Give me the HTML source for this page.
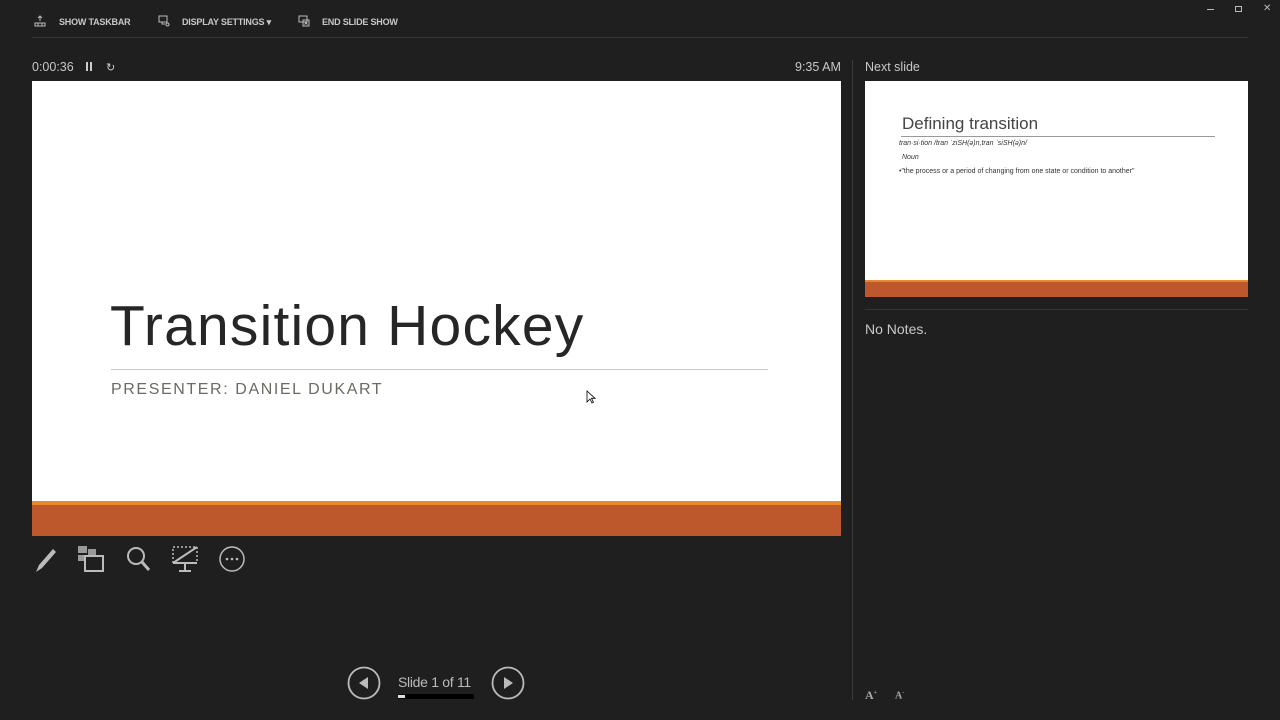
<!DOCTYPE html>
<html><head><style>
*{margin:0;padding:0;box-sizing:border-box}
body{width:1280px;height:720px;background:#1f1f1f;font-family:"Liberation Sans",sans-serif;color:#ccc;position:relative;overflow:hidden}
.a{position:absolute}
.tb{font-size:9px;font-weight:bold;color:#c8c8c8;top:17px;letter-spacing:-0.2px}
</style></head><body>
<div class="a tb" style="left:34px;top:15px"><svg width="12" height="12" viewBox="0 0 12 12" fill="none" stroke="#bbb"><path d="M6 1v5M4 3l2-2 2 2M1 8h10v3H1zM4 8v3M8 8v3"/></svg></div>
<div class="a tb" style="left:59px">SHOW TASKBAR</div>
<div class="a tb" style="left:158px;top:15px"><svg width="12" height="12" viewBox="0 0 12 12" fill="none" stroke="#bbb"><rect x="1" y="1" width="8" height="6"/><path d="M4 7v2h3"/><circle cx="9.5" cy="9.5" r="1.5"/></svg></div>
<div class="a tb" style="left:182px">DISPLAY SETTINGS ▾</div>
<div class="a tb" style="left:298px;top:15px"><svg width="12" height="12" viewBox="0 0 12 12" fill="none" stroke="#bbb"><rect x="1" y="1" width="8" height="6"/><rect x="5" y="5" width="6" height="6"/><path d="M6.5 6.5l3 3M9.5 6.5l-3 3"/></svg></div>
<div class="a tb" style="left:322px">END SLIDE SHOW</div>
<div class="a" style="left:1207px;top:9px;width:7px;height:1px;background:#bbb"></div>
<div class="a" style="left:1235px;top:6px;width:7px;height:6px;border:1px solid #bbb"></div>
<div class="a" style="left:1263px;top:3px;font-size:10px;color:#bbb">✕</div>
<div class="a" style="left:32px;top:37px;width:1216px;height:1px;background:#333"></div>

<div class="a" style="left:32px;top:60px;font-size:12.5px;color:#c8c8c8">0:00:36</div>
<div class="a" style="left:86px;top:62px;width:2px;height:9px;background:#ccc"></div>
<div class="a" style="left:90px;top:62px;width:2px;height:9px;background:#ccc"></div>
<div class="a" style="left:106px;top:61px;font-size:11px;color:#ccc">↻</div>
<div class="a" style="left:795px;top:60px;font-size:12.5px;color:#c8c8c8">9:35 AM</div>
<div class="a" style="left:865px;top:60px;font-size:12.5px;color:#c8c8c8">Next slide</div>

<div class="a" style="left:32px;top:81px;width:809px;height:455px;background:#fff">
 <div class="a" style="left:78px;top:212px;font-size:57px;color:#262626;letter-spacing:1.2px;font-weight:300">Transition Hockey</div>
 <div class="a" style="left:79px;top:288px;width:657px;height:1px;background:#c8c8c8"></div>
 <div class="a" style="left:79px;top:300px;font-size:16px;color:#6b6b60;letter-spacing:1.6px">PRESENTER: DANIEL DUKART</div>
 <div class="a" style="left:0;top:420px;width:809px;height:4px;background:#e8882a"></div>
 <div class="a" style="left:0;top:424px;width:809px;height:31px;background:#bd582c"></div>
</div>
<svg class="a" style="left:586px;top:390px" width="10" height="14" viewBox="0 0 10 14"><path d="M1 1v11l3-3 2 4 1.5-.7-2-4H9z" fill="#fff" stroke="#000" stroke-width=".8"/></svg>

<div class="a" style="left:865px;top:81px;width:383px;height:216px;background:#fff">
 <div class="a" style="left:37px;top:33px;font-size:17px;color:#444">Defining transition</div>
 <div class="a" style="left:36px;top:55px;width:314px;height:1px;background:#999"></div>
 <div class="a" style="left:34px;top:59px;font-size:7px;font-style:italic;color:#333">tran·si·tion /tran ˈziSH(ə)n,tran ˈsiSH(ə)n/</div>
 <div class="a" style="left:37px;top:73px;font-size:7px;font-style:italic;color:#333">Noun</div>
 <div class="a" style="left:34px;top:87px;font-size:7px;color:#333">•"the process or a period of changing from one state or condition to another"</div>
 <div class="a" style="left:0;top:199px;width:383px;height:2px;background:#e8882a"></div>
 <div class="a" style="left:0;top:201px;width:383px;height:15px;background:#bd582c"></div>
</div>
<div class="a" style="left:865px;top:309px;width:383px;height:1px;background:#333"></div>
<div class="a" style="left:865px;top:321px;font-size:14px;color:#c8c8c8">No Notes.</div>
<div class="a" style="left:852px;top:60px;width:1px;height:640px;background:#3a3a3a"></div>
<div class="a" style="left:865px;top:688px;font-size:12px;font-family:'Liberation Serif',serif;color:#aaa;font-weight:bold">A<sup style="font-size:6px">+</sup></div>
<div class="a" style="left:895px;top:690px;font-size:10px;font-family:'Liberation Serif',serif;color:#aaa;font-weight:bold">A<sup style="font-size:6px">-</sup></div>

<svg class="a" style="left:32px;top:544px" width="220" height="30" viewBox="0 0 220 30" fill="none" stroke="#bbb" stroke-width="2">
 <path d="M4 28l3-7 14-16 3 3-14 16z" fill="#bbb" stroke="none"/>
 <rect x="46" y="2" width="9" height="7" fill="#999" stroke="none"/>
 <rect x="46" y="11" width="6" height="6" fill="#999" stroke="none"/>
 <rect x="56" y="5" width="8" height="6" fill="#999" stroke="none"/>
 <rect x="53" y="12" width="18" height="15"/>
 <circle cx="104" cy="12" r="8"/><path d="M110 18l7 8" stroke-width="3"/>
 <path d="M141 3h24v16h-24z" stroke-dasharray="2 2" stroke-width="1.5"/>
 <path d="M141 19h24M141 19L165 3" stroke-width="2"/>
 <path d="M153 19v7M147 27h12"/>
 <circle cx="200" cy="15" r="12" stroke-width="1.5"/>
 <circle cx="195" cy="15" r="1.3" fill="#bbb" stroke="none"/><circle cx="200" cy="15" r="1.3" fill="#bbb" stroke="none"/><circle cx="205" cy="15" r="1.3" fill="#bbb" stroke="none"/>
</svg>

<svg class="a" style="left:347px;top:666px" width="180" height="36" viewBox="0 0 180 36">
 <circle cx="17" cy="17" r="15.5" fill="none" stroke="#bbb" stroke-width="1.8"/>
 <path d="M21 11v12l-9-6z" fill="#bbb"/>
 <circle cx="161" cy="17" r="15.5" fill="none" stroke="#bbb" stroke-width="1.8"/>
 <path d="M157 11v12l9-6z" fill="#bbb"/>
</svg>
<div class="a" style="left:398px;top:674px;font-size:14px;color:#bbb;letter-spacing:-0.3px">Slide 1 of 11</div>
<div class="a" style="left:398px;top:694px;width:76px;height:5px;background:#000"></div>
<div class="a" style="left:398px;top:695px;width:7px;height:3px;background:#ddd"></div>
</body></html>
